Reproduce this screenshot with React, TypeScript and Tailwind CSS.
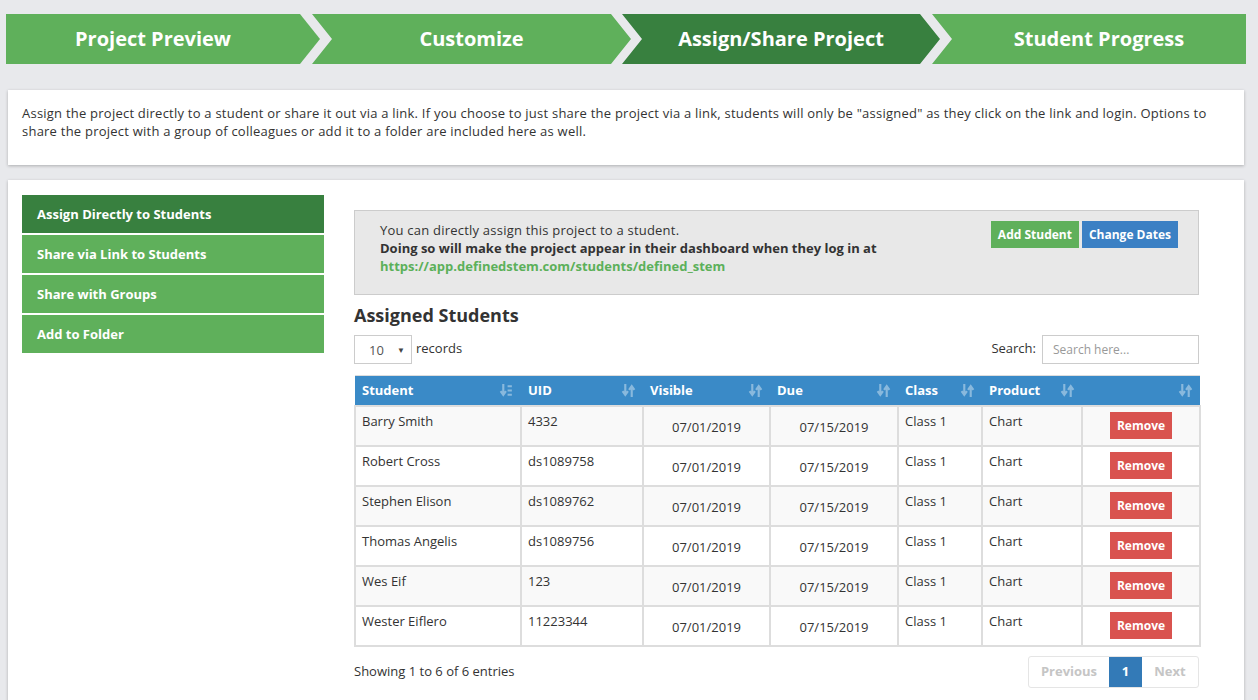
import React from 'react';

const students = [
  { name: 'Barry Smith', uid: '4332' },
  { name: 'Robert Cross', uid: 'ds1089758' },
  { name: 'Stephen Elison', uid: 'ds1089762' },
  { name: 'Thomas Angelis', uid: 'ds1089756' },
  { name: 'Wes Eif', uid: '123' },
  { name: 'Wester Eiflero', uid: '11223344' },
];

const navItems = ['Assign Directly to Students', 'Share via Link to Students', 'Share with Groups', 'Add to Folder'];

function SortIcon({ active }: { active?: boolean }) {
  return (
    <svg width="15" height="15" viewBox="0 0 14 14" className="opacity-40">
      <path d="M4 1v9M1.5 7.5L4 11l2.5-3.5" stroke="#fff" strokeWidth="2" fill="none" />
      {active ? (
        <path d="M8 2h4v2H8zM8 6h4v2H8zM8 10h4v2H8z" fill="#fff" />
      ) : (
        <path d="M10 13V4M7.5 6.5L10 3l2.5 3.5" stroke="#fff" strokeWidth="2" fill="none" />
      )}
    </svg>
  );
}

export default function App() {
  const cols = [
    { label: 'Student', w: 'w-[166px]' },
    { label: 'UID', w: 'w-[122px]' },
    { label: 'Visible', w: 'w-[127px]' },
    { label: 'Due', w: 'w-[128px]' },
    { label: 'Class', w: 'w-[84px]' },
    { label: 'Product', w: 'w-[100px]' },
    { label: '', w: 'w-[118px]' },
  ];

  return (
    <div className="min-h-[700px] bg-[#e8e9ec] text-[#333] font-['Open_Sans',sans-serif] overflow-hidden">
      {/* steps */}
      <div className="flex pl-[6px] pt-[14px]">
        <div className="w-[314px] h-[50px] bg-[#5fb05b] pr-[20px] flex items-center justify-center text-white text-[20px] font-bold [clip-path:polygon(0_0,calc(100%-20px)_0,100%_50%,calc(100%-20px)_100%,0_100%)]">
          Project Preview
        </div>
        <div className="w-[319px] h-[50px] -ml-[8px] bg-[#5fb05b] px-[20px] flex items-center justify-center text-white text-[20px] font-bold [clip-path:polygon(0_0,calc(100%-20px)_0,100%_50%,calc(100%-20px)_100%,0_100%,20px_50%)]">
          Customize
        </div>
        <div className="w-[318px] h-[50px] -ml-[9px] bg-[#38803f] px-[20px] flex items-center justify-center text-white text-[20px] font-bold [clip-path:polygon(0_0,calc(100%-20px)_0,100%_50%,calc(100%-20px)_100%,0_100%,20px_50%)]">
          Assign/Share Project
        </div>
        <div className="w-[314px] h-[50px] -ml-[8px] bg-[#5fb05b] pl-[20px] flex items-center justify-center text-white text-[20px] font-bold [clip-path:polygon(0_0,100%_0,100%_100%,0_100%,20px_50%)]">
          Student Progress
        </div>
      </div>

      {/* description */}
      <div className="mt-[26px] ml-[8px] w-[1236px] h-[75px] bg-white shadow-[0_1px_3px_rgba(0,0,0,0.25)] pl-[14px] pr-[20px] pt-[14px] text-[13px] leading-[18px] tracking-[0.23px]">
        Assign the project directly to a student or share it out via a link. If you choose to just share the project via a link, students will only be "assigned" as they click on the link and login. Options to share the project with a group of colleagues or add it to a folder are included here as well.
      </div>

      {/* main panel */}
      <div className="mt-[15px] ml-[8px] w-[1236px] h-[600px] bg-white shadow-[0_1px_3px_rgba(0,0,0,0.25)] pl-[14px] pt-[15px] flex">
        <div className="w-[302px] flex flex-col gap-[2px]">
          {navItems.map((item, i) => (
            <div
              key={item}
              className={`h-[38px] flex items-center pl-[15px] pt-[1px] text-white text-[13px] font-bold ${i === 0 ? 'bg-[#38803f]' : 'bg-[#5fb05b]'}`}
            >
              {item}
            </div>
          ))}
        </div>

        <div className="ml-[30px] w-[845px] pt-[15px]">
          <div className="h-[85px] bg-[#e8e8e8] border border-[#cccccc] pl-[25px] pr-[20px] pt-[10px] flex justify-between">
            <div className="text-[13px] leading-[18px]">
              <div className="tracking-[0.22px]">You can directly assign this project to a student.</div>
              <div className="font-bold">Doing so will make the project appear in their dashboard when they log in at</div>
              <div className="font-bold text-[#5cb05a]">https://app.definedstem.com/students/defined_stem</div>
            </div>
            <div className="flex gap-[3px] h-[27px]">
              <button className="h-[27px] px-[7px] bg-[#5fb05b] text-white text-[12px] font-bold">Add Student</button>
              <button className="h-[27px] px-[7px] bg-[#3b80c4] text-white text-[12px] font-bold">Change Dates</button>
            </div>
          </div>

          <h2 className="mt-[9px] text-[18px] font-bold leading-[22px]">Assigned Students</h2>

          <div className="mt-[9px] flex justify-between items-start">
            <div className="flex items-start">
              <div className="w-[58px] h-[29px] border border-[#ccc] flex items-center pl-[14px] pr-[6px] justify-between">
                <span className="text-[13px] text-[#555] pt-[2px]">10</span>
                <span className="text-[8px] text-[#444]">▼</span>
              </div>
              <span className="ml-[4px] text-[13px] leading-[26px]">records</span>
            </div>
            <div className="flex items-start">
              <span className="text-[13px] leading-[26px] mr-[6px]">Search:</span>
              <div className="w-[157px] h-[29px] border border-[#ccc] flex items-center pl-[10px] text-[12px] text-[#999]">
                Search here...
              </div>
            </div>
          </div>

          <table className="mt-[11px] w-[845px] border-collapse table-fixed text-[13px]">
            <thead>
              <tr className="bg-[#3a8ac7] h-[30px]">
                {cols.map((c, i) => (
                  <th key={i} className={`${c.w} text-left text-white font-bold px-[7px] border-y border-[#ddd]`}>
                    <div className="flex items-center justify-between">
                      <span>{c.label}</span>
                      <SortIcon active={i === 0} />
                    </div>
                  </th>
                ))}
              </tr>
            </thead>
            <tbody>
              {students.map((s, i) => (
                <tr key={s.name} className={`h-[40px] ${i % 2 === 0 ? 'bg-[#f9f9f9]' : 'bg-white'}`}>
                  <td className="border-2 border-[#ddd] px-[6px] align-top pt-[5px]">{s.name}</td>
                  <td className="border-2 border-[#ddd] px-[6px] align-top pt-[5px]">{s.uid}</td>
                  <td className="border-2 border-[#ddd] text-center pt-[4px]">07/01/2019</td>
                  <td className="border-2 border-[#ddd] text-center pt-[4px]">07/15/2019</td>
                  <td className="border-2 border-[#ddd] px-[6px] align-top pt-[5px]">Class 1</td>
                  <td className="border-2 border-[#ddd] px-[6px] align-top pt-[5px]">Chart</td>
                  <td className="border-2 border-[#ddd] text-center">
                    <button className="w-[62px] h-[27px] bg-[#d9534f] text-white text-[12px] font-bold">Remove</button>
                  </td>
                </tr>
              ))}
            </tbody>
          </table>

          <div className="mt-[9px] flex justify-between items-center">
            <span className="text-[13px]">Showing 1 to 6 of 6 entries</span>
            <div className="flex h-[32px] border border-[#e5e5e5] rounded-[3px] text-[13px] font-bold">
              <span className="w-[80px] flex items-center justify-center text-[#c5c5c5]">Previous</span>
              <span className="w-[33px] flex items-center justify-center bg-[#337ab7] text-white">1</span>
              <span className="w-[56px] flex items-center justify-center text-[#c5c5c5]">Next</span>
            </div>
          </div>
        </div>
      </div>
    </div>
  );
}
